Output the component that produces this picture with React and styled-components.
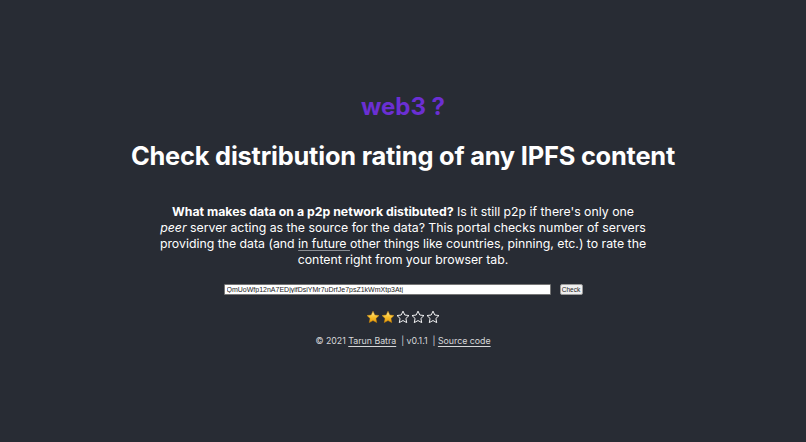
import React, { useState } from "react";
import styled, { createGlobalStyle } from "styled-components";

const GlobalStyle = createGlobalStyle`
    html, body {
        margin: 0;
        padding: 0;
        background: #282c34;
    }
    body {
        font-family: Inter, "Noto Sans", sans-serif;
        color: #ffffff;
    }
`;

const Page = styled.div`
    min-height: 442px;
    display: flex;
    flex-direction: column;
    align-items: center;
    padding-top: 92px;
    box-sizing: border-box;
`;

const Logo = styled.div`
    color: #6b2fd3;
    font-size: 24px;
    font-weight: 700;
    line-height: 30px;
`;

const Title = styled.h1`
    margin: 18px 0 0;
    font-size: 25.4px;
    font-weight: 700;
    line-height: 32px;
    letter-spacing: -0.2px;
`;

const Intro = styled.p`
    margin: 32px 0 0;
    width: 490px;
    text-align: center;
    font-size: 12.3px;
    line-height: 16px;
    color: #ffffff;

    b {
        font-weight: 700;
    }

    u {
        text-decoration-thickness: 1px;
        text-underline-offset: 2px;
        text-decoration-color: #8a8d93;
    }
`;

const Form = styled.div`
    display: flex;
    align-items: center;
    gap: 9px;
    margin-top: 16px;
`;

const CidInput = styled.input`
    width: 327px;
    height: 11px;
    box-sizing: border-box;
    border: 1px solid #767676;
    border-radius: 1px;
    padding: 0 2px;
    font-family: "Liberation Sans", Arial, sans-serif;
    font-size: 7px;
    color: #222;
    background: #fff;
    outline: none;
`;

const CheckButton = styled.button`
    width: 23px;
    height: 11px;
    padding: 0;
    font-family: "Liberation Sans", Arial, sans-serif;
    font-size: 6.5px;
    line-height: 9px;
    color: #222;
    background: #efefef;
    border: 1px solid #9a9a9a;
    border-radius: 2px;
`;

const Stars = styled.div`
    display: flex;
    align-items: center;
    gap: 1px;
    margin-top: 15px;
`;

const Footer = styled.div`
    margin-top: 11px;
    font-size: 8.8px;
    color: #d6d7d9;

    a {
        color: inherit;
        text-decoration: underline;
        text-underline-offset: 2px;
    }
`;

const Star = ({ filled }) => (
    <svg width="14" height="14" viewBox="0 0 24 23">
        <defs>
            <linearGradient id="gold" x1="0" y1="0" x2="0" y2="1">
                <stop offset="0" stopColor="#fff2a8" />
                <stop offset="0.5" stopColor="#f9c22e" />
                <stop offset="1" stopColor="#e89b0c" />
            </linearGradient>
        </defs>
        <path
            d="M12 1.5l3.1 6.6 7.2.9-5.3 5 1.4 7.1L12 17.6l-6.4 3.5 1.4-7.1-5.3-5 7.2-.9z"
            fill={filled ? "url(#gold)" : "none"}
            stroke={filled ? "#d48a06" : "#ffffff"}
            strokeWidth={filled ? 0.8 : 1.6}
            strokeLinejoin="round"
        />
    </svg>
);

const App = () => {
    const [cid, setCid] = useState("QmUoWfp12nA7EDjyifDsiYMr7uDrfJe7psZ1kWmXtp3Atj");
    const rating = 2;

    return (
        <>
            <GlobalStyle />
            <Page>
                <Logo>web3 ?</Logo>
                <Title>Check distribution rating of any IPFS content</Title>
                <Intro>
                    <b>What makes data on a p2p network distibuted?</b> Is it still p2p if there's only one{" "}
                    <i>peer</i> server acting as the source for the data? This portal checks number of servers
                    providing the data (and <u>in future </u>other things like countries, pinning, etc.) to rate the
                    content right from your browser tab.
                </Intro>
                <Form>
                    <CidInput value={cid} onChange={(e) => setCid(e.target.value)} />
                    <CheckButton>Check</CheckButton>
                </Form>
                <Stars>
                    {[0, 1, 2, 3, 4].map((i) => (
                        <Star key={i} filled={i < rating} />
                    ))}
                </Stars>
                <Footer>
                    © 2021 <a href="#">Tarun Batra</a>&nbsp; | v0.1.1 &nbsp;|&nbsp;<a href="#">Source code</a>
                </Footer>
            </Page>
        </>
    );
};

export default App;
